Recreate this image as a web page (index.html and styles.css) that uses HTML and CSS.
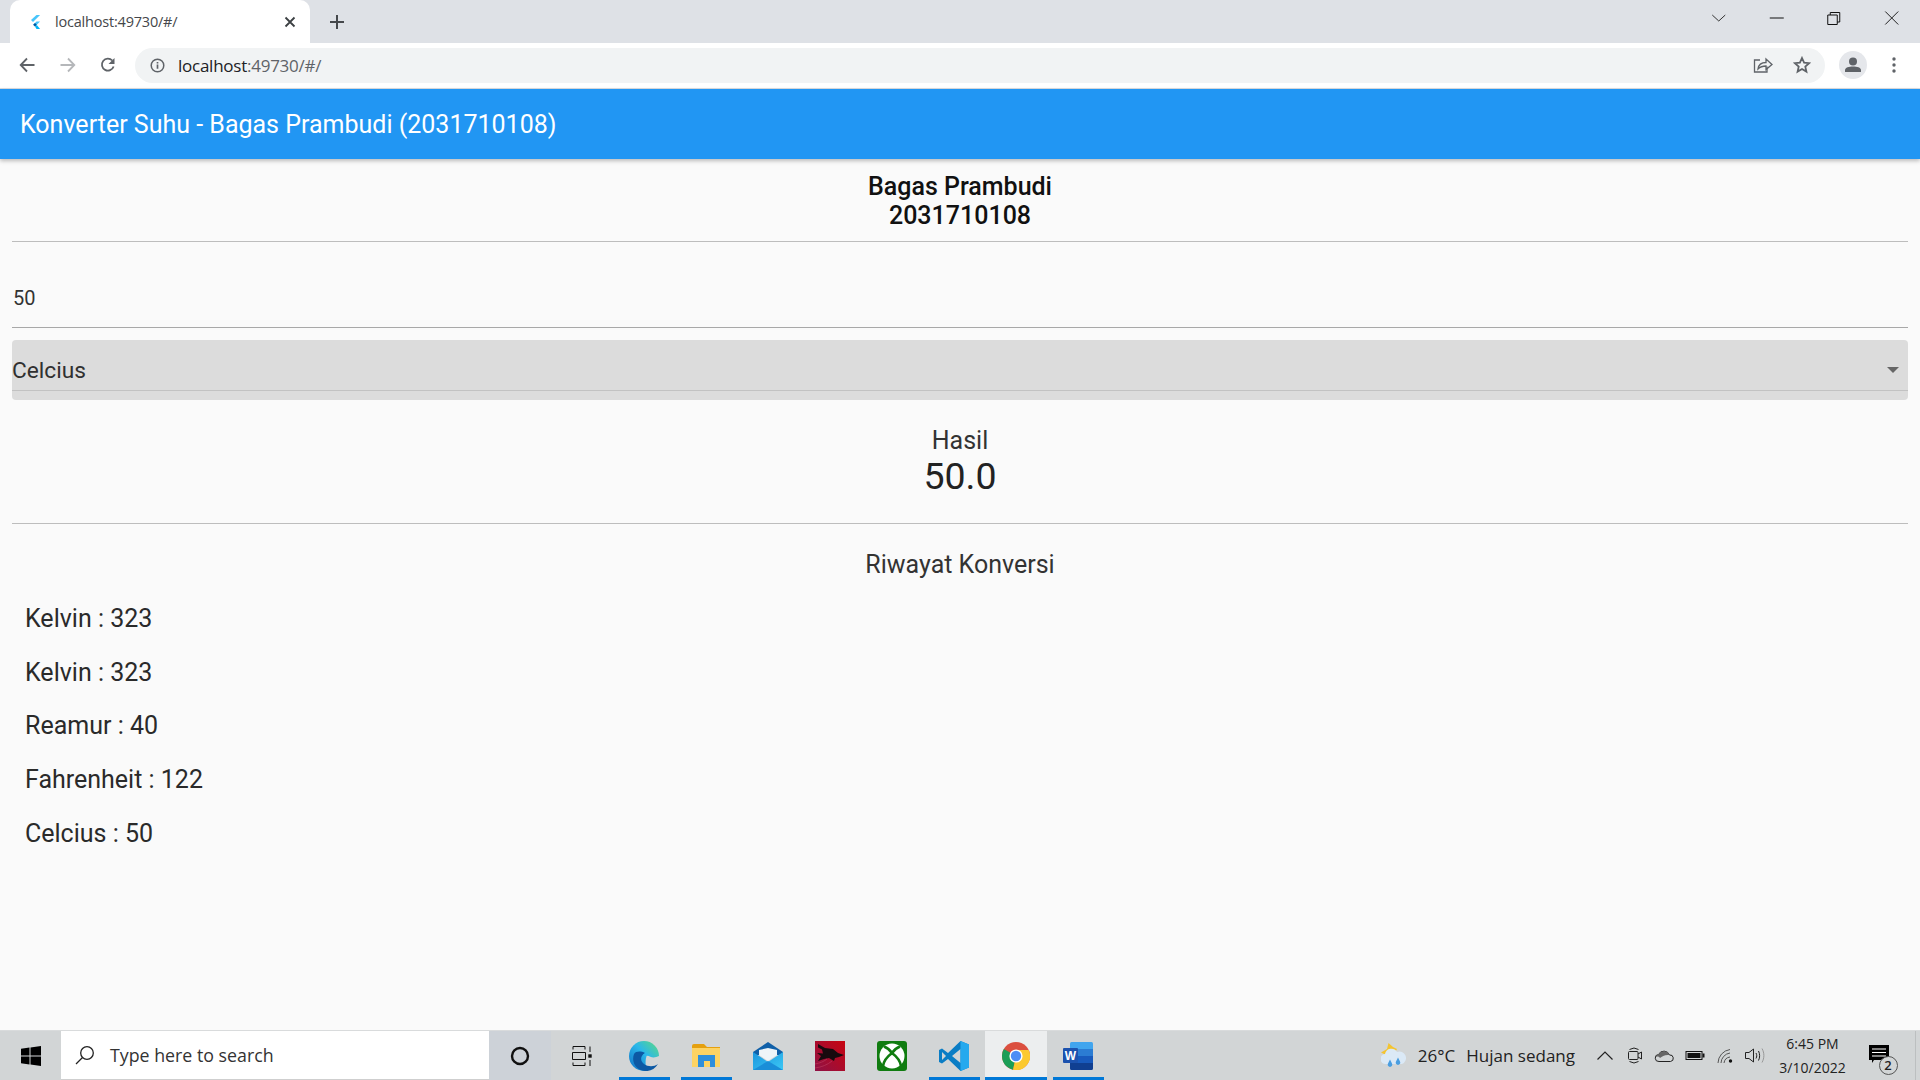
FILE: index.html
```html
<!DOCTYPE html>
<html lang="id">
<head>
<meta charset="utf-8">
<title>localhost:49730/#/</title>
<link rel="stylesheet" href="styles.css">
</head>
<body>
<div class="screen">
  <header class="chrome">
    <div class="tabstrip">
      <div class="tab">
        <svg class="favicon" viewBox="0 0 16 16"><path d="M9.500 1h3.600L6 8 4 6z" fill="#47c5fb"/><path d="M13.100 7.500H9.500L6.200 10.800l1.800 1.800z" fill="#47c5fb"/><path d="M6.200 10.800 8 9l1.800 1.800L8 12.600z" fill="#00569e"/><path d="M8 12.600 9.500 15h3.600L9.800 11z" fill="#00b5f8"/></svg>
        <span class="tab-title">localhost:49730/#/</span>
        <svg class="tab-close" viewBox="0 0 12 12"><path d="M1.500 1.500l9 9M10.500 1.500l-9 9" stroke="#3c4043" stroke-width="1.800" fill="none"/></svg>
      </div>
      <svg class="new-tab" viewBox="0 0 14 14"><path d="M7 0v14M0 7h14" stroke="#45484c" stroke-width="2" fill="none"/></svg>
      <div class="win-controls">
        <svg class="win-btn chev" viewBox="0 0 14 8"><path d="M.5 1 7 7l6.500-6" stroke="#333" fill="none"/></svg>
        <svg class="win-btn min" viewBox="0 0 14 2"><path d="M0 1h14" stroke="#111" fill="none"/></svg>
        <svg class="win-btn max" viewBox="0 0 13 13"><path d="M.5 3h9.500v9.500H.5zM3 3V.5h9.500V10H10" stroke="#111" fill="none"/></svg>
        <svg class="win-btn cls" viewBox="0 0 14 14"><path d="M.5.500l13 13M13.500.500l-13 13" stroke="#222" fill="none"/></svg>
      </div>
    </div>
    <div class="toolbar">
      <div class="nav-slot"><svg class="nav-ic" viewBox="0 0 16 16"><path d="M15.500 8H2M8 1.500 1.700 8 8 14.500" stroke="#5f6368" stroke-width="1.800" fill="none"/></svg></div>
      <div class="nav-slot"><svg class="nav-ic" viewBox="0 0 16 16"><path d="M.5 8H14M8 1.500 14.300 8 8 14.500" stroke="#b5b7ba" stroke-width="1.800" fill="none"/></svg></div>
      <div class="nav-slot"><svg class="nav-ic" viewBox="0 0 16 16"><path d="M13.600 9.500A6 6 0 1 1 12.300 3.500" stroke="#5f6368" stroke-width="1.800" fill="none"/><path d="M14.500 1v6h-6z" fill="#5f6368"/></svg></div>
      <div class="omnibox">
        <svg class="info" viewBox="0 0 16 16"><circle cx="8" cy="8" r="6.700" stroke="#5f6368" stroke-width="1.600" fill="none"/><path d="M8 7v4.500M8 4.200v1.600" stroke="#5f6368" stroke-width="1.800"/></svg>
        <span class="url"><span class="host">localhost</span>:49730/#/</span>
        <svg class="omni-ic" viewBox="0 0 20 18"><path d="M14 10.500V16H1.500V4H7" stroke="#5f6368" stroke-width="1.300" fill="none"/><path d="M5 13c.5-4 3.500-6.500 8-6.500V3l6 5.500-6 5v-3.500c-3.500 0-6 1-8 3z" stroke="#5f6368" stroke-width="1.300" fill="none"/></svg>
        <svg class="omni-ic star" viewBox="0 0 18 18"><path d="M9 2l2.100 4.700 5 .5-3.800 3.400 1.100 5L9 13l-4.400 2.600 1.100-5L1.900 7.200l5-.5z" stroke="#5f6368" stroke-width="1.800" fill="none"/></svg>
      </div>
      <div class="avatar"><svg viewBox="0 0 28 28"><circle cx="14" cy="14" r="14" fill="#e5e7eb"/><circle cx="14" cy="10.500" r="4" fill="#5f6368"/><path d="M6 21v-2c0-2.500 4-3.500 8-3.500s8 1 8 3.500v2z" fill="#5f6368"/></svg></div>
      <div class="menu-slot"><svg class="menu-ic" viewBox="0 0 4 16"><circle cx="2" cy="2" r="1.700" fill="#5f6368"/><circle cx="2" cy="8" r="1.700" fill="#5f6368"/><circle cx="2" cy="14" r="1.700" fill="#5f6368"/></svg></div>
    </div>
  </header>

  <div class="appbar">Konverter Suhu - Bagas Prambudi (2031710108)</div>

  <main class="content">
    <div class="identity">
      <div>Bagas Prambudi</div>
      <div>2031710108</div>
    </div>
    <div class="field">50</div>
    <div class="dropdown">
      <span>Celcius</span>
      <svg class="caret" viewBox="0 0 12 6"><path d="M0 0h12L6 6z" fill="#666"/></svg>
    </div>
    <div class="result">
      <div class="result-label">Hasil</div>
      <div class="result-value">50.0</div>
    </div>
    <div class="history-title">Riwayat Konversi</div>
    <ul class="history">
      <li>Kelvin : 323</li>
      <li>Kelvin : 323</li>
      <li>Reamur : 40</li>
      <li>Fahrenheit : 122</li>
      <li>Celcius : 50</li>
    </ul>
  </main>

  <footer class="taskbar">
    <div class="start"><svg viewBox="0 0 20 20"><path d="M0 2.800 8.500 1.600V9.500H0zM9.500 1.500 20 0v9.500H9.500zM0 10.500h8.500v7.900L0 17.200zM9.500 10.500H20V20L9.500 18.500z" fill="#000"/></svg></div>
    <div class="search">
      <svg class="search-ic" viewBox="0 0 20 20"><circle cx="12" cy="8" r="6.300" stroke="#222" stroke-width="1.300" fill="none"/><path d="M7.500 12.500 1 19" stroke="#222" stroke-width="1.300"/></svg>
      <span>Type here to search</span>
    </div>
    <div class="cortana"><svg viewBox="0 0 20 20"><circle cx="10" cy="10" r="8" stroke="#111" stroke-width="2.400" fill="none"/></svg></div>
    <div class="taskview"><svg viewBox="0 0 20 20"><path d="M1 3.500V.5h12v3M.5 6.500h13v7H.5zM1 16.500v3h12v-3M18 .5V6M18 14v6" stroke="#111" fill="none"/><rect x="16.300" y="8.300" width="3.400" height="3.400" fill="#111"/></svg></div>
    <div class="apps">
      <div class="app active"><svg class="ic30" viewBox="0 0 30 30"><defs><linearGradient id="edgeg" x1="0" y1="1" x2="1" y2="0"><stop offset="0" stop-color="#0f6fc4"/><stop offset=".55" stop-color="#2bb7ea"/><stop offset="1" stop-color="#5fdc7c"/></linearGradient></defs><circle cx="15" cy="15" r="15" fill="url(#edgeg)"/><path d="M18 14c4 3 8 3 12 1v8L22 30h-3c-3-3-3-12-1-16z" fill="#d2d5d6"/><path d="M5 13c-3 8 2 16 11 17 5 .5 10-2 13-7-4 3-10 3-14 0-4-3-4-8 1-11-4-2-9-2-11 1z" fill="#0c59a4"/><path d="M14 14c2-2.500 5-2 6 .5-2 .5-4 0-6-.5z" fill="#2bb7ea"/></svg></div>
      <div class="app active"><svg class="ic-folder" viewBox="0 0 28 23"><path d="M0 2a2 2 0 0 1 2-2h10l3 3H28v2H0z" fill="#e5a00f"/><path d="M0 4h28v19H0z" fill="#fdd364"/><path d="M6 23V11h17v12h-5v-6h-6v6z" fill="#2f8fdc"/></svg></div>
      <div class="app"><svg class="ic-mail" viewBox="0 0 30 28"><defs><linearGradient id="mailg" x1="0" y1="0" x2="1" y2="1"><stop offset="0" stop-color="#1b95dd"/><stop offset="1" stop-color="#3cc8f5"/></linearGradient></defs><path d="M0 10 15 0l15 10v3H0z" fill="#0f5fa8"/><path d="M6 8 15 6l9 2v5l-9 6-9-6z" fill="#eef4f8"/><path d="M0 10l15 10 15-10v18H0z" fill="url(#mailg)"/><path d="M0 28l15-9 15 9z" fill="#1a8ed8"/></svg></div>
      <div class="app"><svg class="ic30" viewBox="0 0 30 30"><defs><linearGradient id="msig" x1="0" y1="1" x2="1" y2="0"><stop offset="0" stop-color="#8e1246"/><stop offset="1" stop-color="#c80410"/></linearGradient></defs><rect width="30" height="30" fill="url(#msig)"/><path d="M3 3l7 4 8 1 5 4 6 2-5 2-4 1-1 3-5-3-5 1-6 2 3-5-4-3 6 .5-1-4-4-2z" fill="#170a0e"/><path d="M0 27c7-1 12-3 17-7M0 23c5-1 8-2 12-5" stroke="#b02a50" fill="none"/></svg></div>
      <div class="app"><svg class="ic30" viewBox="0 0 30 30"><rect width="30" height="30" rx="3" fill="#107c10"/><circle cx="15" cy="15" r="12.500" fill="#fff"/><path d="M7 5.500Q12 7.500 15 12Q18 7.500 23 5.500M15 12Q7 18 6 25M15 12Q23 18 24 25" stroke="#107c10" stroke-width="2.600" fill="none"/></svg></div>
      <div class="app active"><svg class="ic30" viewBox="0 0 30 30"><path fill-rule="evenodd" d="M21.500 0 9 12 3 7.500 0 9v12l3 1.500L9 18l12.500 12 8.500-3.500v-23zM21.500 8v14L13 15zM3 11v8l4-4z" fill="#0a7dc5"/><path fill-rule="evenodd" d="M21.500 0 30 3.500v23L21.500 30V22V8z" fill="#25a9ee"/></svg></div>
      <div class="app active current"><svg class="ic-chrome" viewBox="0 0 28 28"><circle cx="14" cy="14" r="14" fill="#db4f3f"/><path d="M14 14 1.900 7A14 14 0 0 0 11 27.700z" fill="#1b9e57"/><path d="M14 14V7.900H26.600A14 14 0 0 1 11 27.700z" fill="#fbc930"/><circle cx="14" cy="14" r="6.600" fill="#fff"/><circle cx="14" cy="14" r="5.200" fill="#4d8df5"/></svg></div>
      <div class="app active"><svg class="ic-word" viewBox="0 0 30 28"><path d="M7 1.500A1.500 1.500 0 0 1 8.500 0h20A1.500 1.500 0 0 1 30 1.500V7H7z" fill="#41a5ee"/><path d="M7 7h23v7H7z" fill="#2b7cd3"/><path d="M7 14h23v7H7z" fill="#185abd"/><path d="M7 21h23v5.500a1.500 1.500 0 0 1-1.500 1.500h-20A1.500 1.500 0 0 1 7 26.500z" fill="#103f91"/><rect x="0" y="6" width="15" height="15" rx="1" fill="#1c52ae"/><text class="word-letter" x="7.500" y="17.500">W</text></svg></div>
    </div>
    <div class="tray">
      <svg class="weather" viewBox="0 0 26 26"><path d="M0 9.500 6 6 7.500 0 12 4l4 2-5 9z" fill="#f4c430"/><path d="M5 21a5 5 0 0 1-1-10 6.500 6.500 0 0 1 12-2 6 6 0 0 1 5 12z" fill="#dbe9f6"/><path d="M9 16.500l-2 4a2.300 2.300 0 1 0 4 0zM17 14.500l-2 4a2.300 2.300 0 1 0 4 0z" fill="#4a9ee0"/></svg>
      <span class="temp">26°C</span>
      <span class="cond">Hujan sedang</span>
      <svg class="tray-ic chevron" viewBox="0 0 16 9"><path d="M.5 8.500 8 1l7.500 7.500" stroke="#222" stroke-width="1.200" fill="none"/></svg>
      <svg class="tray-ic video" viewBox="0 0 14 19"><path d="M1.500 3.500Q6 .5 10.500 3.500M1.500 15.500q4.500 3 9 0" stroke="#222" fill="none"/><rect x=".5" y="5.500" width="9.500" height="8" rx="1" stroke="#222" fill="none"/><path d="M10 8l3.500-2v7L10 11" stroke="#222" fill="none"/></svg>
      <svg class="tray-ic cloud" viewBox="0 0 20 12"><path d="M4 11.500a3.500 3.500 0 0 1-.5-7 6 6 0 0 1 11 .5 3 3 0 0 1 1 6.500z" stroke="#222" fill="#d2d5d6"/><path d="M3.500 4.500a6 6 0 0 1 11 .5C10 4.500 7 6 5 8a3 3 0 0 0-4.400-1c.6-1.500 1.500-2.300 2.900-2.500z" fill="#666"/></svg>
      <svg class="tray-ic battery" viewBox="0 0 19 9"><rect x=".5" y=".5" width="16" height="8" stroke="#111" fill="none"/><rect x="2" y="2" width="13" height="5" fill="#111"/><rect x="17" y="2.500" width="2" height="4" fill="#111"/></svg>
      <svg class="tray-ic wifi" viewBox="0 0 16 15"><path d="M1 15A14 14 0 0 1 13 1.500M4 15A10.500 10.500 0 0 1 13 5M7 15a7 7 0 0 1 6-6" stroke="#555" fill="none"/><circle cx="13.500" cy="13" r="1.700" fill="#111"/></svg>
      <svg class="tray-ic speaker" viewBox="0 0 20 15"><path d="M.5 4.500h3.500L8.500 1v13L4 10.500H.5z" stroke="#222" fill="none"/><path d="M11 5c1 2 1 3.500 0 5.500M13.500 3c1.500 3 1.500 6.500 0 9.500" stroke="#222" fill="none"/><path d="M17 .5c2.500 4.500 2.500 9.500 0 14" stroke="#999" fill="none"/></svg>
      <div class="clock"><div>6:45 PM</div><div>3/10/2022</div></div>
      <div class="notify">
        <svg viewBox="0 0 20 18"><path d="M0 0h20v15H5l-2 3v-3H0z" fill="#000"/><path d="M3 4h14M3 7.500h14M3 11h14" stroke="#fff" stroke-width="1.200"/></svg>
        <span class="badge">2</span>
      </div>
    </div>
  </footer>
</div>
</body>
</html>
```

FILE: styles.css
```css
* { box-sizing: border-box; }
html, body { margin: 0; padding: 0; }
body { width: 1920px; height: 1080px; overflow: hidden; font-family: Roboto, "Liberation Sans", sans-serif; background: #fafafa; color: #212121; }
.screen { display: flex; flex-direction: column; width: 1920px; height: 1080px; }

.chrome { flex: none; height: 89px; display: flex; flex-direction: column; font-family: "Open Sans", "Noto Sans", sans-serif; }
.tabstrip { height: 43px; background: #dee1e6; display: flex; align-items: center; }
.tab { width: 300px; height: 43px; margin-left: 10px; background: #fff; border-radius: 10px 10px 0 0; display: flex; align-items: center; padding: 0 14px 0 17px; }
.favicon { width: 16px; height: 16px; flex: none; }
.tab-title { font-size: 14.500px; margin-left: 12px; color: #45474a; flex: 1; letter-spacing: -.2px; }
.tab-close { width: 12px; height: 12px; }
.new-tab { width: 14px; height: 14px; margin-left: 20px; }
.win-controls { margin-left: auto; display: flex; align-items: center; align-self: flex-start; height: 36px; }
.win-btn { display: block; width: 57.500px; }
.chev { height: 8px; }
.min { height: 2px; }
.max { height: 13px; }
.cls { height: 14px; }

.toolbar { height: 46px; background: #fff; border-bottom: 1px solid #dadce0; display: flex; align-items: center; padding: 0 0 1px 7px; }
.nav-slot { width: 40.500px; display: flex; justify-content: center; flex: none; }
.nav-ic { width: 16px; height: 16px; }
.omnibox { flex: 1; height: 35px; background: #f1f3f4; border-radius: 18px; margin-left: 6.500px; display: flex; align-items: center; padding: 0 14px 0 15px; }
.info { width: 15px; height: 15px; flex: none; }
.url { font-size: 17px; color: #5f6368; margin-left: 13px; flex: 1; letter-spacing: -.25px; }
.host { color: #202124; }
.omni-ic { width: 20px; height: 18px; flex: none; }
.omni-ic.star { width: 18px; margin-left: 20px; }
.avatar { width: 28px; height: 28px; margin-left: 14px; flex: none; }
.avatar svg { display: block; width: 28px; height: 28px; }
.menu-slot { width: 53px; display: flex; justify-content: center; flex: none; }
.menu-ic { width: 4px; height: 16px; }

.appbar { flex: none; height: 70px; background: #2196f3; color: #fff; font-size: 25px; line-height: 72px; padding-left: 20px; box-shadow: 0 2px 4px rgba(0,0,0,.25); position: relative; }

.content { flex: 1; min-height: 0; padding: 0 12px; background: #fafafa; display: flex; flex-direction: column; }
.identity { text-align: center; font-size: 25px; font-weight: 500; line-height: 29px; padding-top: 13px; height: 83px; color: #111; border-bottom: 1px solid #bdbdbd; }
.field { height: 86px; padding: 44px 0 0 1px; font-size: 20px; line-height: 24px; border-bottom: 1px solid #a8a8a8; color: #333; }
.dropdown { position: relative; height: 60px; margin-top: 12px; background: #dcdcdc; border-radius: 4px; font-size: 22.700px; color: #303030; display: flex; align-items: center; justify-content: space-between; padding: 0 9px 0 0; }
.dropdown::after { content: ""; position: absolute; left: 0; right: 0; bottom: 9px; height: 1px; background: #c2c2c2; }
.caret { width: 12px; height: 6px; }
.result { text-align: center; height: 124px; padding-top: 26px; border-bottom: 1px solid #bdbdbd; }
.result-label { font-size: 25px; line-height: 29px; color: #333; }
.result-value { font-size: 37.500px; line-height: 42px; color: #222; }
.history-title { text-align: center; font-size: 25px; line-height: 30px; margin-top: 26px; color: #333; }
.history { list-style: none; margin: 12px 0 0; padding: 0 0 0 13px; }
.history li { font-size: 25px; line-height: 30px; height: 53.700px; padding-top: 12px; color: #2a2a2a; }

.taskbar { flex: none; height: 50px; background: #d2d5d6; display: flex; align-items: stretch; font-family: "Open Sans", "Noto Sans", sans-serif; border-top: 1px solid #d9dbdc; }
.start { width: 61px; display: flex; align-items: center; justify-content: center; }
.start svg { width: 20px; height: 20px; }
.search { width: 428px; background: #fff; display: flex; align-items: center; border-bottom: 1px solid #cfcfcf; padding-left: 14px; font-size: 17.800px; color: #333; }
.search-ic { width: 20px; height: 20px; margin-right: 15px; }
.cortana { width: 62px; display: flex; align-items: center; justify-content: center; background: #cdd2d8; }
.cortana svg { width: 20px; height: 20px; }
.taskview { width: 62px; display: flex; align-items: center; justify-content: center; }
.taskview svg { width: 20px; height: 20px; }
.apps { display: flex; }
.app { position: relative; width: 62px; display: flex; align-items: center; justify-content: center; }
.ic30 { width: 30px; height: 30px; }
.ic-folder { width: 28px; height: 23px; }
.ic-mail { width: 30px; height: 28px; }
.ic-chrome { width: 28px; height: 28px; }
.ic-word { width: 30px; height: 28px; }
.app.active::after { content: ""; position: absolute; left: 5.500px; right: 5.500px; bottom: 0; height: 3px; background: #0078d7; }
.app.current { background: #eceeef; }
.app.current::after { left: 0; right: 0; }
.word-letter { font-family: "Liberation Sans", sans-serif; font-size: 12px; font-weight: 700; fill: #fff; text-anchor: middle; }

.tray { margin-left: auto; display: flex; align-items: center; font-size: 17px; color: #222; }
.weather { width: 26px; height: 26px; margin-right: 11px; }
.temp { margin-right: 11px; }
.cond { margin-right: 15px; }
.tray-ic { display: block; width: 30px; flex: none; }
.chevron { height: 9px; }
.video { height: 19px; }
.cloud { height: 12px; }
.battery { height: 9px; }
.wifi { height: 15px; }
.speaker { height: 15px; }
.clock { text-align: center; font-size: 14px; line-height: 24px; width: 85px; }
.notify { position: relative; align-self: stretch; width: 61px; padding: 14px 0 0 14px; border-right: 1px solid #bcbfc0; margin-right: 4px; }
.notify svg { width: 20px; height: 18px; display: block; }
.badge { position: absolute; left: 23.500px; top: 24.500px; width: 19px; height: 19px; border: 1px solid #555; border-radius: 50%; background: #d2d5d6; font-size: 13px; line-height: 17px; text-align: center; font-weight: 600; }
```
